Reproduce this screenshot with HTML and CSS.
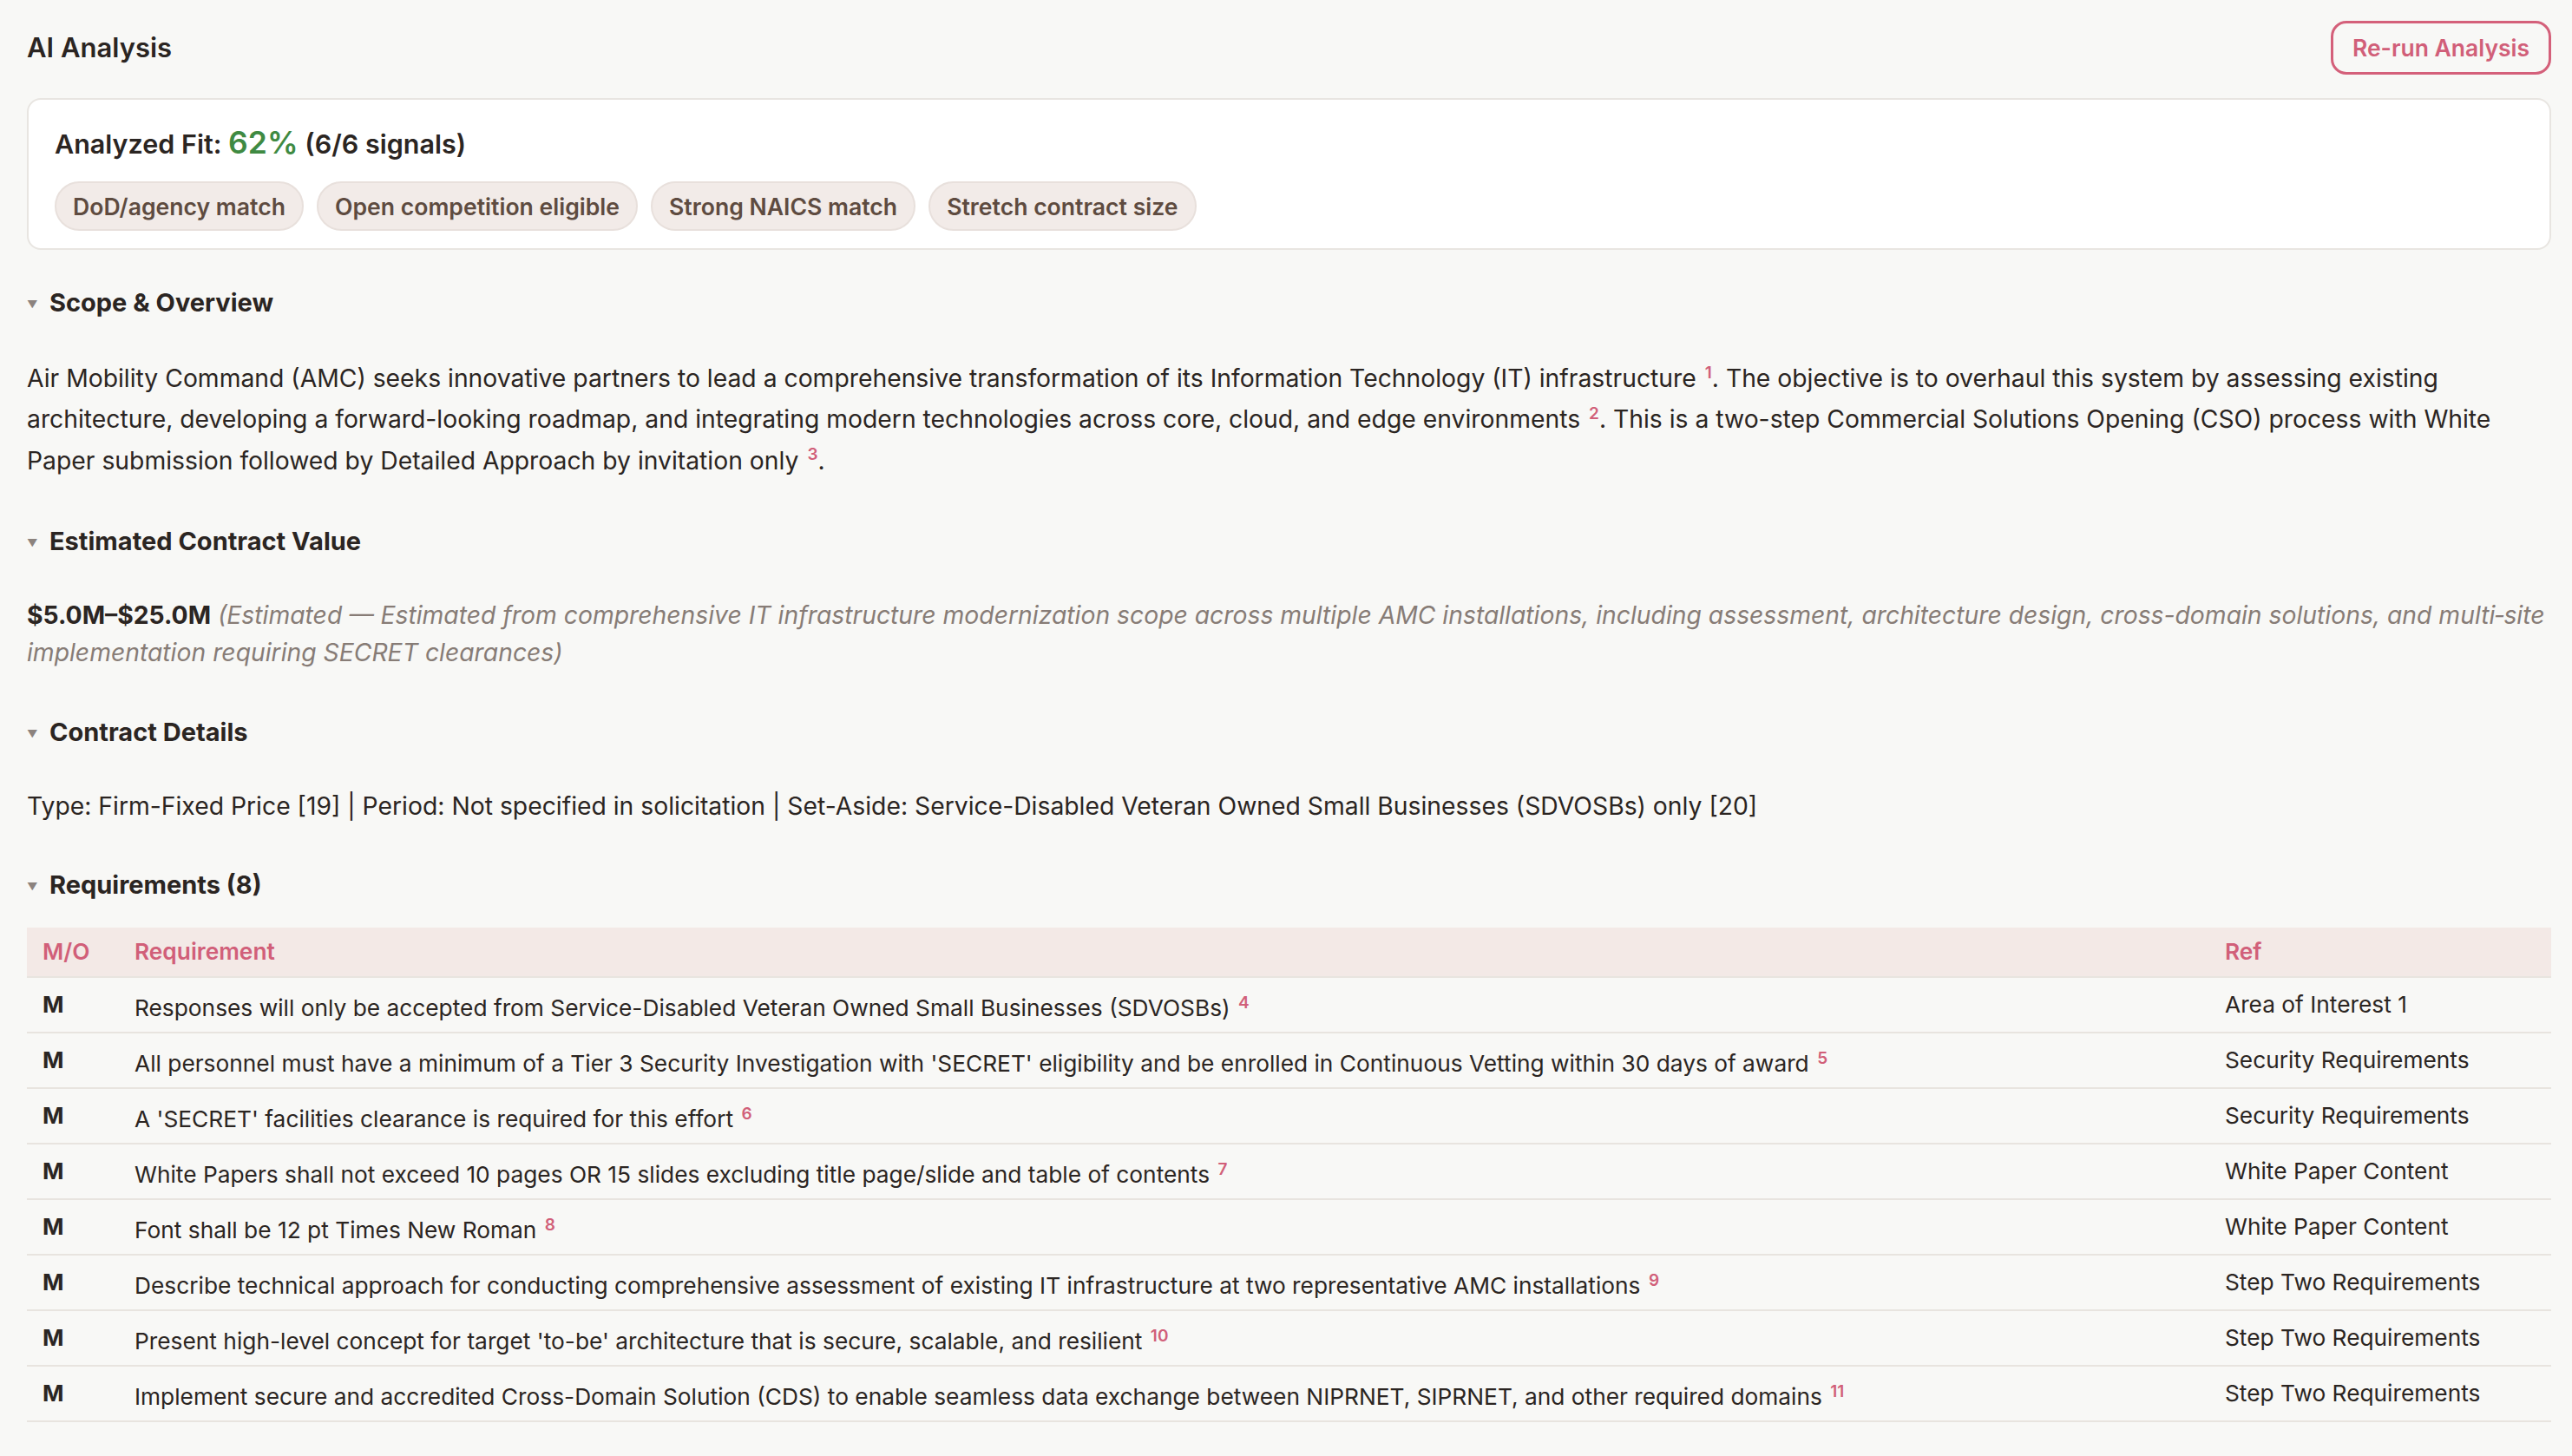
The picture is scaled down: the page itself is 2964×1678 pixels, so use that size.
FILE: index.html
```html
<!DOCTYPE html>
<html lang="en">
<head>
<meta charset="utf-8">
<title>AI Analysis</title>
<link rel="stylesheet" href="styles.css">
</head>
<body>
<div class="page">
  <header class="top">
    <h1 class="title">AI Analysis</h1>
    <button class="rerun">Re-run Analysis</button>
  </header>

  <section class="fit-card">
    <div class="fit-line">Analyzed Fit: <span class="fit-pct">62%</span> (6/6 signals)</div>
    <div class="chips">
      <span class="chip">DoD/agency match</span>
      <span class="chip">Open competition eligible</span>
      <span class="chip">Strong NAICS match</span>
      <span class="chip">Stretch contract size</span>
    </div>
  </section>

  <section class="block">
    <h2 class="sec-head"><span class="caret">▼</span>Scope &amp; Overview</h2>
    <p class="text cited">Air Mobility Command (AMC) seeks innovative partners to lead a comprehensive transformation of its Information Technology (IT) infrastructure <sup class="ref">1</sup>. The objective is to overhaul this system by assessing existing architecture, developing a forward-looking roadmap, and integrating modern technologies across core, cloud, and edge environments <sup class="ref">2</sup>. This is a two-step Commercial Solutions Opening (CSO) process with White Paper submission followed by Detailed Approach by invitation only <sup class="ref">3</sup>.</p>
  </section>

  <section class="block">
    <h2 class="sec-head"><span class="caret">▼</span>Estimated Contract Value</h2>
    <p class="text"><strong class="value">$5.0M–$25.0M</strong> <em class="note">(Estimated — Estimated from comprehensive IT infrastructure modernization scope across multiple AMC installations, including assessment, architecture design, cross-domain solutions, and multi&#8209;site implementation requiring SECRET clearances)</em></p>
  </section>

  <section class="block">
    <h2 class="sec-head"><span class="caret">▼</span>Contract Details</h2>
    <p class="text">Type: Firm-Fixed Price [19] | Period: Not specified in solicitation | Set-Aside: Service-Disabled Veteran Owned Small Businesses (SDVOSBs) only [20]</p>
  </section>

  <section class="block">
    <h2 class="sec-head"><span class="caret">▼</span>Requirements (8)</h2>
    <table class="req">
      <thead>
        <tr><th class="c-mo">M/O</th><th class="c-req">Requirement</th><th class="c-ref">Ref</th></tr>
      </thead>
      <tbody>
        <tr><td class="c-mo">M</td><td class="c-req">Responses will only be accepted from Service-Disabled Veteran Owned Small Businesses (SDVOSBs) <sup class="ref">4</sup></td><td class="c-ref">Area of Interest 1</td></tr>
        <tr><td class="c-mo">M</td><td class="c-req">All personnel must have a minimum of a Tier 3 Security Investigation with 'SECRET' eligibility and be enrolled in Continuous Vetting within 30 days of award <sup class="ref">5</sup></td><td class="c-ref">Security Requirements</td></tr>
        <tr><td class="c-mo">M</td><td class="c-req">A 'SECRET' facilities clearance is required for this effort <sup class="ref">6</sup></td><td class="c-ref">Security Requirements</td></tr>
        <tr><td class="c-mo">M</td><td class="c-req">White Papers shall not exceed 10 pages OR 15 slides excluding title page/slide and table of contents <sup class="ref">7</sup></td><td class="c-ref">White Paper Content</td></tr>
        <tr><td class="c-mo">M</td><td class="c-req">Font shall be 12 pt Times New Roman <sup class="ref">8</sup></td><td class="c-ref">White Paper Content</td></tr>
        <tr><td class="c-mo">M</td><td class="c-req">Describe technical approach for conducting comprehensive assessment of existing IT infrastructure at two representative AMC installations <sup class="ref">9</sup></td><td class="c-ref">Step Two Requirements</td></tr>
        <tr><td class="c-mo">M</td><td class="c-req">Present high-level concept for target 'to-be' architecture that is secure, scalable, and resilient <sup class="ref">10</sup></td><td class="c-ref">Step Two Requirements</td></tr>
        <tr><td class="c-mo">M</td><td class="c-req">Implement secure and accredited Cross-Domain Solution (CDS) to enable seamless data exchange between NIPRNET, SIPRNET, and other required domains <sup class="ref">11</sup></td><td class="c-ref">Step Two Requirements</td></tr>
      </tbody>
    </table>
  </section>
</div>
</body>
</html>
```

FILE: styles.css
```css
* { box-sizing: border-box; }

html, body {
  margin: 0;
  padding: 0;
  background: #f8f8f6;
}

body {
  font-family: Inter, "Noto Sans", "Liberation Sans", sans-serif;
  color: #2b2522;
}

.page {
  padding: 24px 24px 0 31px;
}

.top {
  display: flex;
  justify-content: space-between;
  align-items: center;
}

.title {
  margin: 0;
  font-size: 31px;
  font-weight: 600;
  line-height: 44px;
  color: #2b2522;
}

.rerun {
  font-family: inherit;
  font-size: 26.5px;
  font-weight: 600;
  color: #d15f79;
  background: transparent;
  border: 3px solid #d4607a;
  border-radius: 18px;
  height: 62px;
  width: 254px;
  padding: 0;
}

.fit-card {
  margin-top: 27px;
  background: #ffffff;
  border: 2px solid #e8e5e1;
  border-radius: 16px;
  padding: 28px 30px 20px 30px;
}

.fit-line {
  font-size: 30.5px;
  font-weight: 600;
  line-height: 44px;
  color: #2b2522;
}

.fit-pct {
  font-size: 35.5px;
  color: #3f8a42;
}

.chips {
  display: flex;
  gap: 15px;
  margin-top: 21px;
}

.chip {
  display: inline-flex;
  align-items: center;
  height: 57px;
  padding: 0 19px;
  border-radius: 999px;
  background: #f2ebe8;
  border: 2px solid #e8e0dc;
  color: #5e4b40;
  font-size: 26.6px;
  font-weight: 600;
}

.block {
  margin-top: 39px;
}

.block + .block {
  margin-top: 47px;
}

.sec-head {
  margin: 0 0 27px 0;
  font-size: 29px;
  font-weight: 700;
  line-height: 40px;
  color: #2b2522;
  display: flex;
  align-items: center;
}

.caret {
  font-size: 12px;
  color: #8c837e;
  width: 26px;
  display: inline-block;
  margin-top: 4px;
}

.text {
  margin: 42px 0 0 0;
  font-size: 28.3px;
  line-height: 43.5px;
}

.text.cited {
  line-height: 47.3px;
}

.ref {
  color: #d15f79;
  font-size: 19px;
  font-weight: 600;
  line-height: 0;
  margin-left: 2px;
}

.value {
  font-weight: 700;
}

.note {
  color: #877c76;
}

.req {
  width: 100%;
  border-collapse: collapse;
  font-size: 26.3px;
}

.req th {
  background: #f3e9e6;
  color: #d15f79;
  font-weight: 600;
  text-align: left;
  padding: 10px 18px;
  line-height: 36px;
  border-bottom: 2px solid #e8e4df;
}

.req td {
  vertical-align: top;
  padding: 12px 18px;
  line-height: 38px;
  border-bottom: 2px solid #e8e4df;
}

.req td.c-mo {
  font-weight: 700;
}

.req td.c-req {
  padding-top: 16px;
  padding-bottom: 8px;
}

.req .c-mo { width: 124px; }
.req .c-ref { width: 394px; }
.req th.c-req, .req td.c-req { padding-left: 0; }
```
